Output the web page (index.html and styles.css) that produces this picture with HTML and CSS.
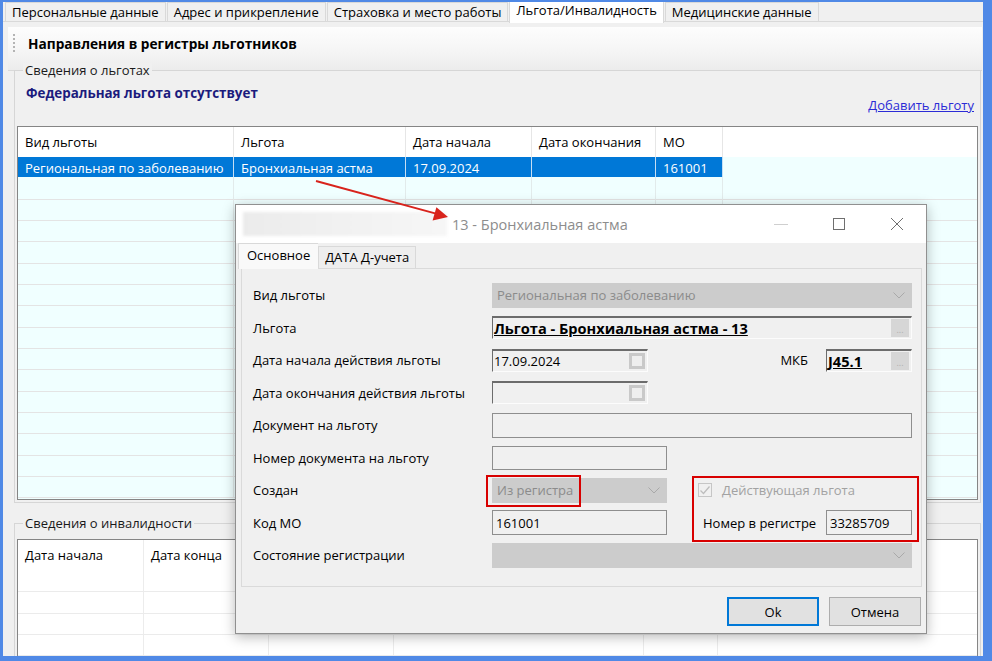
FILE: index.html
```html
<!DOCTYPE html>
<html>
<head>
<meta charset="utf-8">
<title>Льгота/Инвалидность</title>
<link rel="stylesheet" href="styles.css">
</head>
<body>
<div class="screen">
  <div class="window">
    <div class="tabs">
      <div class="tab">Персональные данные</div>
      <div class="tab">Адрес и прикрепление</div>
      <div class="tab">Страховка и место работы</div>
      <div class="tab active">Льгота/Инвалидность</div>
      <div class="tab">Медицинские данные</div>
    </div>

    <div class="page">
      <div class="toolbar"><span class="grip"></span><b>Направления в регистры льготников</b></div>

      <div class="group group1">
        <span class="legend">Сведения о льготах</span>
        <div class="info">
          <b class="fed">Федеральная льгота отсутствует</b>
          <a href="#" class="addlink">Добавить льготу</a>
        </div>
        <div class="grid grid1">
          <div class="row head"><span>Вид льготы</span><span>Льгота</span><span>Дата начала</span><span>Дата окончания</span><span>МО</span><span></span></div>
          <div class="row sel"><span>Региональная по заболеванию</span><span>Бронхиальная астма</span><span>17.09.2024</span><span></span><span>161001</span><span></span></div>
          <div class="row"><span></span><span></span><span></span><span></span><span></span><span></span></div>
          <div class="row"><span></span><span></span><span></span><span></span><span></span><span></span></div>
          <div class="row"><span></span><span></span><span></span><span></span><span></span><span></span></div>
          <div class="row"><span></span><span></span><span></span><span></span><span></span><span></span></div>
          <div class="row"><span></span><span></span><span></span><span></span><span></span><span></span></div>
          <div class="row"><span></span><span></span><span></span><span></span><span></span><span></span></div>
          <div class="row"><span></span><span></span><span></span><span></span><span></span><span></span></div>
          <div class="row"><span></span><span></span><span></span><span></span><span></span><span></span></div>
          <div class="row"><span></span><span></span><span></span><span></span><span></span><span></span></div>
          <div class="row"><span></span><span></span><span></span><span></span><span></span><span></span></div>
          <div class="row"><span></span><span></span><span></span><span></span><span></span><span></span></div>
          <div class="row"><span></span><span></span><span></span><span></span><span></span><span></span></div>
          <div class="row"><span></span><span></span><span></span><span></span><span></span><span></span></div>
          <div class="row"><span></span><span></span><span></span><span></span><span></span><span></span></div>
          <div class="row"><span></span><span></span><span></span><span></span><span></span><span></span></div>
        </div>
      </div>

      <div class="group group2">
        <span class="legend">Сведения о инвалидности</span>
        <div class="grid grid2">
          <div class="row head"><span>Дата начала</span><span>Дата конца</span><span></span><span></span><span></span><span></span></div>
          <div class="row"><span></span><span></span><span></span><span></span><span></span><span></span></div>
          <div class="row"><span></span><span></span><span></span><span></span><span></span><span></span></div>
          <div class="row"><span></span><span></span><span></span><span></span><span></span><span></span></div>
          <div class="row"><span></span><span></span><span></span><span></span><span></span><span></span></div>
        </div>
      </div>
    </div>
  </div>

  <!-- окно редактирования льготы -->
  <div class="dialog">
    <div class="dtitle">
      <div class="blur"></div>
      <div class="caption">13 - Бронхиальная астма</div>
      <div class="ctl"><svg width="14" height="14" viewBox="0 0 14 14"><path d="M0 7.5h14" stroke="#cfcfcf" fill="none"/></svg></div>
      <div class="ctl"><svg width="14" height="14" viewBox="0 0 14 14"><rect x="1.5" y="1.5" width="11" height="11" stroke="#6f6f6f" fill="none"/></svg></div>
      <div class="ctl"><svg width="14" height="14" viewBox="0 0 14 14"><path d="M1 1L13 13M13 1L1 13" stroke="#6f6f6f" fill="none"/></svg></div>
    </div>

    <div class="dtabs">
      <div class="dtab active">Основное</div>
      <div class="dtab">ДАТА Д-учета</div>
    </div>

    <div class="panel">
      <div class="form">
        <div class="lbl">Вид льготы</div>
        <div class="combo span3"><span>Региональная по заболеванию</span><svg width="12" height="7" viewBox="0 0 12 7"><path d="M0.5 0.5L6 6L11.5 0.5" stroke="#a9a9a9" fill="none"/></svg></div>

        <div class="lbl">Льгота</div>
        <div class="field sunken lookup span3"><b>Льгота - Бронхиальная астма - 13</b><span class="dots">...</span></div>

        <div class="lbl">Дата начала действия льготы</div>
        <div class="field sunken date"><span>17.09.2024</span><span class="sq"></span></div>
        <div class="lbl mkb">МКБ</div>
        <div class="field sunken lookup"><b>J45.1</b><span class="dots">...</span></div>

        <div class="lbl">Дата окончания действия льготы</div>
        <div class="field sunken date"><span></span><span class="sq"></span></div>
        <div class="span2"></div>

        <div class="lbl">Документ на льготу</div>
        <div class="field tall span3"></div>

        <div class="lbl">Номер документа на льготу</div>
        <div class="field"></div>
        <div class="span2"></div>

        <div class="lbl">Создан</div>
        <div class="combo"><span>Из регистра</span><svg width="12" height="7" viewBox="0 0 12 7"><path d="M0.5 0.5L6 6L11.5 0.5" stroke="#a9a9a9" fill="none"/></svg></div>
        <div class="check span2"><span class="box"><svg width="12" height="12" viewBox="0 0 12 12"><path d="M1.5 6.5L4.5 9.5L10.5 2.5" stroke="#bdbdbd" fill="none" stroke-width="1.3"/></svg></span>Действующая льгота</div>

        <div class="lbl">Код МО</div>
        <div class="field tall"><span>161001</span></div>
        <div class="lbl regnum">Номер в регистре</div>
        <div class="field tall"><span>33285709</span></div>

        <div class="lbl">Состояние регистрации</div>
        <div class="combo span3"><span></span><svg width="12" height="7" viewBox="0 0 12 7"><path d="M0.5 0.5L6 6L11.5 0.5" stroke="#a9a9a9" fill="none"/></svg></div>
      </div>
    </div>

    <div class="footer">
      <button class="btn ok">Ok</button>
      <button class="btn">Отмена</button>
    </div>

    <div class="mark mark1"></div>
    <div class="mark mark2"></div>
  </div>

  <svg class="arrow" width="992" height="661" viewBox="0 0 992 661">
    <line x1="316" y1="181" x2="436" y2="213.6" stroke="#d8231c" stroke-width="2"/>
    <polygon points="448,217 436.4,207.2 432.6,220.4" fill="#d8231c"/>
  </svg>
</div>
</body>
</html>
```

FILE: styles.css
```css
body {
  margin: 0;
  background: #5089e6;
  font-family: "Open Sans", "Noto Sans", sans-serif;
  font-size: 13px;
  color: #000;
}

.screen {
  position: relative;
  width: 992px;
  height: 661px;
  padding: 2px 9px 5px 3px;
  box-sizing: border-box;
  overflow: hidden;
}

.window {
  height: 100%;
  background: #f0f0f0;
  display: flex;
  flex-direction: column;
  overflow: hidden;
}

/* верхние вкладки */
.tabs {
  display: flex;
  height: 20px;
  padding-left: 2px;
  border-bottom: 1px solid #d9d9d9;
  box-sizing: border-box;
}

.tab {
  height: 20px;
  padding: 0 6px;
  margin-right: 1px;
  border: 1px solid #d9d9d9;
  border-bottom: none;
  box-sizing: border-box;
  line-height: 18px;
  white-space: nowrap;
}

.tab.active {
  background: #fff;
  height: 23px;
  margin-top: -2px;
  position: relative;
}

.page {
  flex: 1;
  padding: 5px 1px 0 5px;
}

.toolbar {
  height: 44px;
  box-sizing: border-box;
  border-bottom: 1px solid #d9d9d9;
  background: linear-gradient(#fdfdfd, #f7f7f7 45%, #ececec);
  display: flex;
  align-items: center;
  padding: 0 0 11px 5px;
}

.toolbar b {
  font-size: 13.7px;
}

.grip {
  width: 0;
  height: 18px;
  border-left: 2px dotted #b4b4b4;
  margin-right: 13px;
}

.group {
  position: relative;
  border: 1px solid #d6d6d6;
  margin: 0 1px 0 6px;
}

.legend {
  position: absolute;
  left: 8px;
  top: -8px;
  padding: 0 2px;
  line-height: 14px;
  background: #f0f0f0;
  color: #1a1a1a;
}

.group1 {
  margin-top: -1px;
  padding: 14px 1px 2px 1px;
}

.info {
  height: 28px;
  display: flex;
  justify-content: space-between;
  margin: 0 5px 0 10px;
}

.fed {
  color: #1b1b7d;
  font-size: 13.4px;
  line-height: 16px;
  align-self: flex-start;
}

.addlink {
  color: #2b2bd6;
  line-height: 16px;
  align-self: flex-end;
}

/* таблицы */
.grid {
  border: 1px solid #858585;
  box-sizing: border-box;
  overflow: hidden;
  margin: 0 1px;
}

.grid1 {
  margin-top: 13px;
  height: 374px;
  background: #f0ffff;
}

.grid1 .row {
  grid-template-columns: 216px 172px 126px 124px 67px 1fr;
}

.grid2 .row {
  grid-template-columns: 126px 125px 125px 250px 74px 1fr;
}

.row {
  display: grid;
  height: 21.33px;
}

.row span {
  border-right: 1px solid #e2ebeb;
  border-bottom: 1px solid #e4e4e4;
  padding: 2px 0 0 7px;
  line-height: 18px;
  white-space: nowrap;
  overflow: hidden;
}

.row span:last-child {
  border-right: none;
}

.row.head {
  height: 30px;
  background: #fff;
}

.row.head span {
  border-bottom: none;
  border-right-color: #e6e6e6;
  padding-top: 0;
  line-height: 30px;
}

.row.sel span {
  background: #0078d7;
  color: #fff;
  border-right-color: #c6def3;
  border-bottom-color: #f0ffff;
}

.row.sel span:last-child {
  background: none;
}

.group2 {
  margin-top: 20px;
  padding: 15px 1px 0 1px;
  height: 200px;
}

.grid2 {
  background: #fff;
  height: 200px;
}

.grid2 .row.head {
  height: 31px;
}

.grid2 .row span {
  border-right-color: #ececec;
  border-bottom-color: #ebebeb;
}

/* диалог */
.dialog {
  position: absolute;
  left: 235px;
  top: 204px;
  width: 692px;
  height: 430px;
  box-sizing: border-box;
  border: 1px solid #909090;
  background: #f0f0f0;
  box-shadow: 0 3px 12px rgba(0, 0, 0, 0.28);
  display: flex;
  flex-direction: column;
}

.dtitle {
  height: 38px;
  background: #fff;
  display: flex;
  align-items: center;
}

.blur {
  width: 204px;
  height: 24px;
  margin-left: 7px;
  background: linear-gradient(90deg, #ebebeb, #f1f1f1 50%, #f6f6f6);
  filter: blur(1.5px);
}

.caption {
  flex: 1;
  margin-left: 5px;
  font-size: 14.5px;
  color: #8d8d8d;
}

.ctl {
  width: 58px;
  height: 38px;
  display: flex;
  align-items: center;
  justify-content: center;
}

.dtabs {
  height: 25px;
  display: flex;
  align-items: flex-end;
  padding-left: 2px;
}

.dtab {
  height: 22px;
  padding: 0 6px;
  border: 1px solid #d9d9d9;
  border-bottom: none;
  box-sizing: border-box;
  line-height: 21px;
  background: #eeeeee;
}

.dtab.active {
  height: 26px;
  margin-bottom: -1px;
  padding: 0 8px;
  background: #f9f9f9;
  line-height: 23px;
  position: relative;
  border-right: none;
}

.panel {
  height: 319px;
  margin: 0 4px 0 5px;
  border: 1px solid #dadada;
  box-sizing: border-box;
}

.form {
  display: grid;
  grid-template-columns: 239px 175px 159px 86px;
  grid-auto-rows: 32.5px;
  align-items: center;
  padding: 10px 0 0 11px;
}

.lbl {
  white-space: nowrap;
}

.span3 {
  grid-column: span 3;
}

.span2 {
  grid-column: span 2;
}

.combo {
  height: 25px;
  background: #cccccc;
  color: #8b8b8b;
  display: flex;
  align-items: center;
  justify-content: space-between;
  padding: 0 7px 0 5px;
  box-sizing: border-box;
}

.field {
  height: 24px;
  border: 1px solid #8e8e8e;
  background: #f0f0f0;
  padding: 0 2px 0 3px;
  box-sizing: border-box;
  display: flex;
  align-items: center;
  justify-content: space-between;
}

.field.tall {
  height: 25px;
}

.sunken {
  height: 23px;
  border-top: 2px solid #6c6c6c;
  border-left: 1px solid #6c6c6c;
  border-right: 1px solid #fcfcfc;
  border-bottom: 1px solid #fcfcfc;
  padding-left: 1px;
}

.lookup b {
  font-size: 14.6px;
  text-decoration: underline;
}

.dots {
  width: 18px;
  height: 18px;
  background: #d6d6d6;
  color: #b0b0b0;
  font-size: 9px;
  line-height: 22px;
  text-align: center;
}

.date {
  width: 156px;
}

.sq {
  width: 16px;
  height: 16px;
  box-sizing: border-box;
  border: 3px solid #c9c9c9;
  background: #eeeeee;
}

.mkb {
  justify-self: end;
  margin-right: 18px;
}

.check {
  display: flex;
  align-items: center;
  margin-left: 31px;
  color: #a2a2a2;
}

.box {
  width: 14px;
  height: 14px;
  box-sizing: border-box;
  border: 1px solid #c6c6c6;
  margin-right: 10px;
  display: flex;
  align-items: center;
  justify-content: center;
}

.regnum {
  margin-left: 36px;
}

.footer {
  flex: 1;
  display: flex;
  justify-content: flex-end;
  align-items: flex-start;
  gap: 10px;
  padding: 10px 5px 0 0;
}

.btn {
  width: 92px;
  height: 29px;
  background: #e1e1e1;
  border: 1px solid #adadad;
  font-family: inherit;
  font-size: 13px;
  color: #000;
  padding: 0;
}

.btn.ok {
  border: 2px solid #0078d7;
}

/* красные пометки поверх окна */
.mark {
  position: absolute;
  border: 2px solid #d80000;
  box-sizing: border-box;
}

.mark1 {
  left: 250px;
  top: 270px;
  width: 95px;
  height: 32px;
}

.mark2 {
  left: 456px;
  top: 271px;
  width: 227px;
  height: 66px;
}

.arrow {
  position: absolute;
  left: 0;
  top: 0;
  pointer-events: none;
}
```
